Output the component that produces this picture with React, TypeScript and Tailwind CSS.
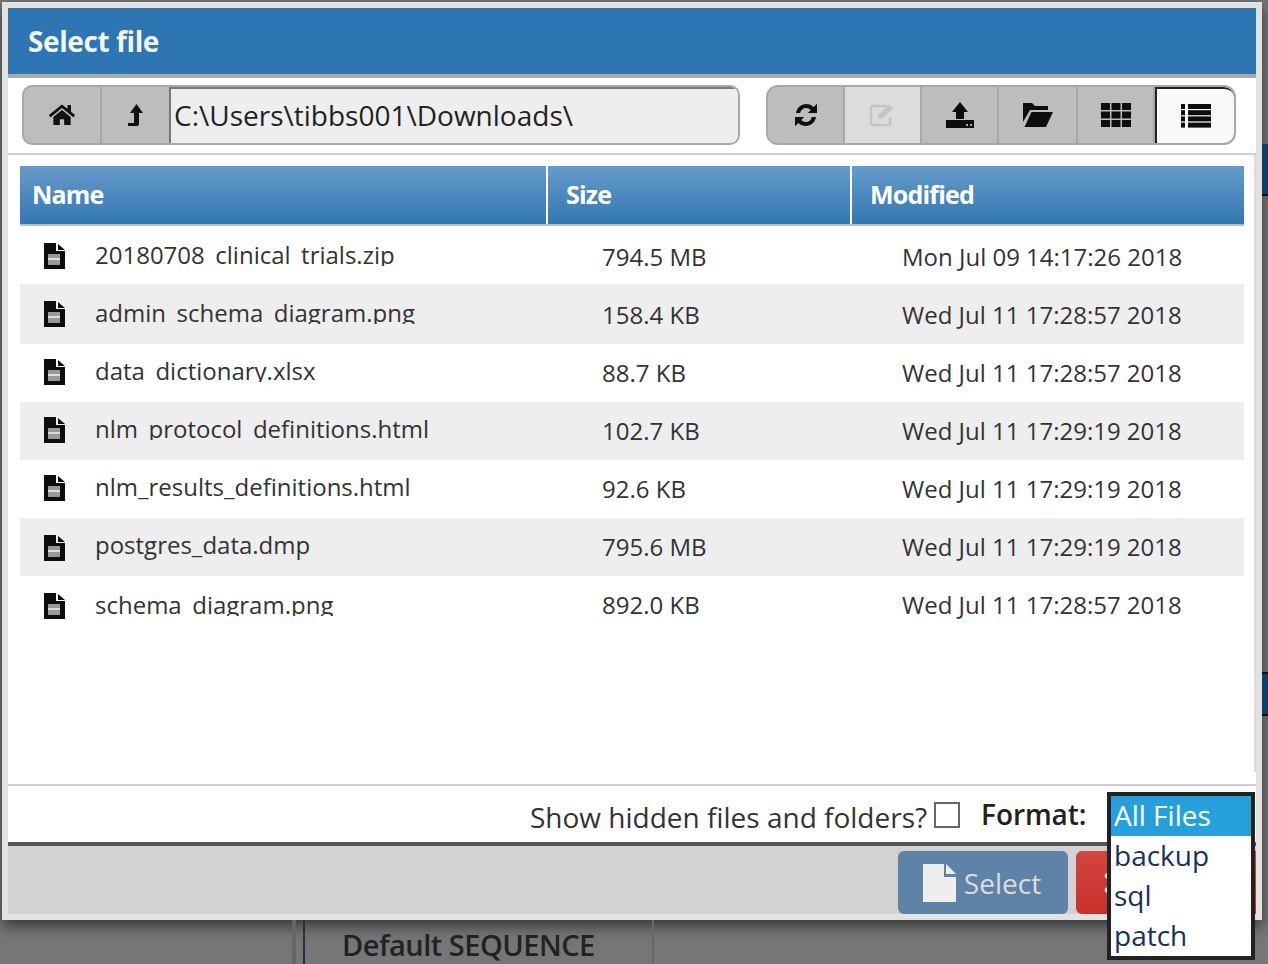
import { FaHome, FaTimes } from 'react-icons/fa'

const FILES = [
  { name: '20180708_clinical_trials.zip', size: '794.5 MB', modified: 'Mon Jul 09 14:17:26 2018', clipped: true },
  { name: 'admin_schema_diagram.png', size: '158.4 KB', modified: 'Wed Jul 11 17:28:57 2018', clipped: true },
  { name: 'data_dictionary.xlsx', size: '88.7 KB', modified: 'Wed Jul 11 17:28:57 2018', clipped: true },
  { name: 'nlm_protocol_definitions.html', size: '102.7 KB', modified: 'Wed Jul 11 17:29:19 2018', clipped: true },
  { name: 'nlm_results_definitions.html', size: '92.6 KB', modified: 'Wed Jul 11 17:29:19 2018', clipped: false },
  { name: 'postgres_data.dmp', size: '795.6 MB', modified: 'Wed Jul 11 17:29:19 2018', clipped: false },
  { name: 'schema_diagram.png', size: '892.0 KB', modified: 'Wed Jul 11 17:28:57 2018', clipped: true },
]

const FORMATS = ['All Files', 'backup', 'sql', 'patch']

function FileIcon() {
  return (
    <svg viewBox="0 0 21 26" className="h-[26px] w-[21px]" fill="#0d0d0d">
      <path d="M0 0h12v8h9v18H0z" />
      <path d="M14 1l7 6h-7z" />
      <rect x="4" y="11" width="12" height="11" fill="#999" />
      <rect x="4" y="15" width="12" height="2" fill="#ddd" />
    </svg>
  )
}

function LevelUpIcon() {
  return (
    <svg viewBox="0 0 18 24" className="h-6 w-[18px]" fill="#111">
      <path d="M9.500 1L16 10h-4v11c0 1.200-.8 2-2 2H1v-3h6V10H3z" />
    </svg>
  )
}

function RefreshIcon() {
  return (
    <svg viewBox="0 0 26 26" className="h-[26px] w-[26px]" fill="#111">
      <path d="M3 11C4 5.500 8 2 13.200 2c3 0 5.500 1.100 7.400 3L24 1.800V11h-9.200l3-3c-1.300-1.300-2.900-2-4.700-2-3 0-5.300 2-6 5z" />
      <path d="M23 15c-1 5.500-5 9-10.200 9-3 0-5.500-1.100-7.400-3L2 24.200V15h9.200l-3 3c1.300 1.300 2.900 2 4.700 2 3 0 5.300-2 6-5z" />
    </svg>
  )
}

function EditIcon() {
  return (
    <svg viewBox="0 0 28 24" className="h-6 w-7" fill="none" stroke="#c4c4c4">
      <path d="M18 3H4a2 2 0 0 0-2 2v15a2 2 0 0 0 2 2h15a2 2 0 0 0 2-2v-6" strokeWidth="2.500" />
      <path d="M9 16l1-5L20 1.500l4 4L14 15z" fill="#c4c4c4" stroke="none" />
    </svg>
  )
}

function UploadIcon() {
  return (
    <svg viewBox="0 0 28 26" className="h-[26px] w-7" fill="#0d0d0d">
      <path d="M14 0l8 10h-4v7h-8v-7H6z" />
      <rect x="0" y="18" width="28" height="8" />
      <rect x="20" y="22" width="2" height="2" fill="#aaa" />
      <rect x="24" y="22" width="2" height="2" fill="#aaa" />
    </svg>
  )
}

function FolderIcon() {
  return (
    <svg viewBox="0 0 30 24" className="h-6 w-[30px]" fill="#0d0d0d">
      <path d="M0 0h9l3 3h13v4H7L0 19z" />
      <path d="M8.500 9H30l-7 15H1.500z" />
    </svg>
  )
}

function GridIcon() {
  const cells = [0, 1, 2, 3, 4, 5, 6, 7, 8]
  return (
    <svg viewBox="0 0 30 24" className="h-6 w-[30px]" fill="#0d0d0d">
      {cells.map((c) => (
        <rect key={c} x={(c % 3) * 10.500} y={Math.floor(c / 3) * 8.500} width="9" height="7" />
      ))}
    </svg>
  )
}

function ListIcon() {
  const rows = [0, 1, 2, 3]
  return (
    <svg viewBox="0 0 30 24" className="h-6 w-[30px]" fill="#0d0d0d">
      {rows.map((r) => (
        <g key={r}>
          <rect x="0" y={r * 6.200} width="4" height="5" />
          <rect x="7" y={r * 6.200} width="23" height="5" />
        </g>
      ))}
    </svg>
  )
}

function DocIcon() {
  return (
    <svg viewBox="0 0 33 38" className="h-[38px] w-[33px]" fill="#eeeeee">
      <path d="M0 0h21v13h12v25H0z" />
      <path d="M23 0l10 10H23z" />
    </svg>
  )
}

function ToolButton({ children, active, disabled, wide }: { children: React.ReactNode; active?: boolean; disabled?: boolean; wide?: boolean }) {
  let tone = 'bg-[#bdbdbd] border-r-2 border-[#a8a8a8]'
  if (disabled) tone = 'bg-[#dcdcdc] border-r-2 border-[#a8a8a8]'
  if (active) tone = 'bg-[#f8f8f8] border-l-2 border-t-2 border-[#222] rounded-r-[10px]'
  return (
    <div className={`flex h-full items-center justify-center ${active ? 'flex-1' : wide ? 'w-[79px]' : 'w-[77px]'} ${tone}`}>
      {children}
    </div>
  )
}

export default function App() {
  return (
    <div className="relative h-[964px] w-[1268px] overflow-hidden bg-[#767676] font-['Open_Sans',sans-serif]">
      {/* Dialog */}
      <div className="ml-[2px] mt-[2px] flex h-[918px] w-[1260px] flex-col border-[6px] border-[#e2e2e2] bg-white shadow-[0_6px_14px_rgba(0,0,0,0.55)]">
        <header className="flex h-[66px] shrink-0 items-center bg-[#2e75b3] pl-5 text-[28px] font-bold tracking-[-0.4px] text-[#f4f4f4]">
          Select file
        </header>
        <div className="h-1 shrink-0 bg-[#a9a9a9]" />

        {/* Toolbar */}
        <div className="flex h-[77px] shrink-0 items-center justify-between border-b-2 border-[#cfcfcf] pb-[2px] pl-[14px] pr-5">
          <div className="flex h-[60px] w-[718px] overflow-hidden rounded-[10px] border-2 border-[#a8a8a8] bg-[#bdbdbd]">
            <div className="flex w-[78px] items-center justify-center border-r-2 border-[#a8a8a8]">
              <FaHome size={26} color="#111" />
            </div>
            <div className="flex w-[67px] items-center justify-center">
              <LevelUpIcon />
            </div>
            <div className="flex flex-1 items-center border-l-2 border-t-2 border-[#777] bg-[#eeeeee] pb-[2px] pl-[3px] text-[28px] leading-none text-[#222]">
              {'C:\\Users\\tibbs001\\Downloads\\'}
            </div>
          </div>
          <div className="flex h-[60px] w-[470px] overflow-hidden rounded-[12px] border-2 border-[#a8a8a8] bg-[#bdbdbd]">
            <ToolButton><RefreshIcon /></ToolButton>
            <ToolButton disabled><EditIcon /></ToolButton>
            <ToolButton><UploadIcon /></ToolButton>
            <ToolButton wide><FolderIcon /></ToolButton>
            <ToolButton><GridIcon /></ToolButton>
            <ToolButton active><ListIcon /></ToolButton>
          </div>
        </div>

        {/* File table */}
        <div className="mb-[12px] flex-1 border-r-2 border-[#dcdcdc] pl-3 pr-[10px] pt-[11px]">
          <div className="grid h-[60px] grid-cols-[526px_304px_1fr] border-b-2 border-[#bbb] bg-gradient-to-b from-[#669bca] to-[#3277b3] text-[25px] font-bold tracking-[-0.8px] text-white">
            <div className="flex items-center pl-3">Name</div>
            <div className="flex items-center border-l-2 border-white pl-[18px]">Size</div>
            <div className="flex items-center border-l-2 border-white pl-[18px]">Modified</div>
          </div>
          {FILES.map((file, i) => {
            // the first two rows and the last one sit 2px lower in their bands
            const low = i < 2 || i === 6
            return (
              <div
                key={file.name}
                className={`grid grid-cols-[582px_300px_1fr] items-center text-[24px] text-[#333] ${i === 1 ? 'h-[60px] pb-[2px]' : 'h-[58px]'} ${i % 2 === 1 ? 'bg-[#eeeeee]' : 'bg-white'}`}
              >
                <div className="flex items-center pl-6">
                  <div className={low || i === 5 ? 'mt-[2px] flex' : 'mb-[2px] flex'}>
                    <FileIcon />
                  </div>
                  <span className={`ml-[30px] block overflow-hidden leading-[30px] ${file.clipped ? (low ? 'mb-[4px] h-[26px]' : 'mb-[8px] h-[26px]') : 'mb-[2px] h-[32px]'}`}>
                    {file.name}
                  </span>
                </div>
                <div className={i < 2 ? 'pt-[3px]' : 'pb-[1px]'}>{file.size}</div>
                <div className={i < 2 ? 'pt-[3px]' : 'pb-[1px]'}>{file.modified}</div>
              </div>
            )
          })}
        </div>

        {/* Options */}
        <div className="flex h-[58px] shrink-0 items-center border-t-2 border-[#cfcfcf] pl-[522px] text-[28px] text-[#333]">
          <span className="mt-[6px]">Show hidden files and folders?</span>
          <span className="ml-[7px] mt-[2px] h-[26px] w-[26px] border-2 border-[#666]" />
          <span className="ml-[21px] font-semibold tracking-[-0.1px] text-[#222]">Format:</span>
        </div>
        <div className="h-1 shrink-0 bg-[#555]" />

        {/* Footer */}
        <div className="flex h-[68px] shrink-0 items-end justify-end gap-2 bg-[#d2d2d2]">
          <button className="flex h-[63px] w-[170px] items-center justify-center gap-[8px] rounded-md bg-[#5f83a6] pr-[2px] text-[28px] text-[#dcdcdc]">
            <DocIcon />
            Select
          </button>
          <div className="flex h-[63px] w-[180px] items-center rounded-l-md bg-gradient-to-b from-[#d2453f] to-[#c9302c] pl-[24px]">
            <FaTimes size={30} color="#fff" />
          </div>
        </div>
      </div>

      {/* Format dropdown */}
      <ul className="absolute left-[1107px] top-[792px] w-[148px] border-4 border-[#222] bg-white text-[28px] leading-[38px] text-[#16325c]">
        {FORMATS.map((format, i) => (
          <li key={format} className={`h-10 pl-[3px] ${i === 0 ? 'bg-[#26a0da] text-white' : ''}`}>
            {format}
          </li>
        ))}
      </ul>

      {/* Page behind the dialog */}
      <div className="absolute left-[292px] top-[920px] h-11 w-[4px] bg-[#666]" />
      <div className="absolute left-[303px] top-[920px] flex h-11 w-[351px] items-center border-l-2 border-r-2 border-l-[#1f3040] border-r-[#666] pl-[37px] pt-[6px] text-[29px] font-semibold tracking-[-0.5px] text-[#222]">
        Default SEQUENCE
      </div>
      <div className="absolute left-[1262px] top-[144px] h-[52px] w-[6px] border-b-2 border-[#111] bg-[#123f66]" />
      <div className="absolute left-[1262px] top-[672px] h-[44px] w-[6px] border-y-2 border-[#111] bg-[#123f66]" />
    </div>
  )
}
